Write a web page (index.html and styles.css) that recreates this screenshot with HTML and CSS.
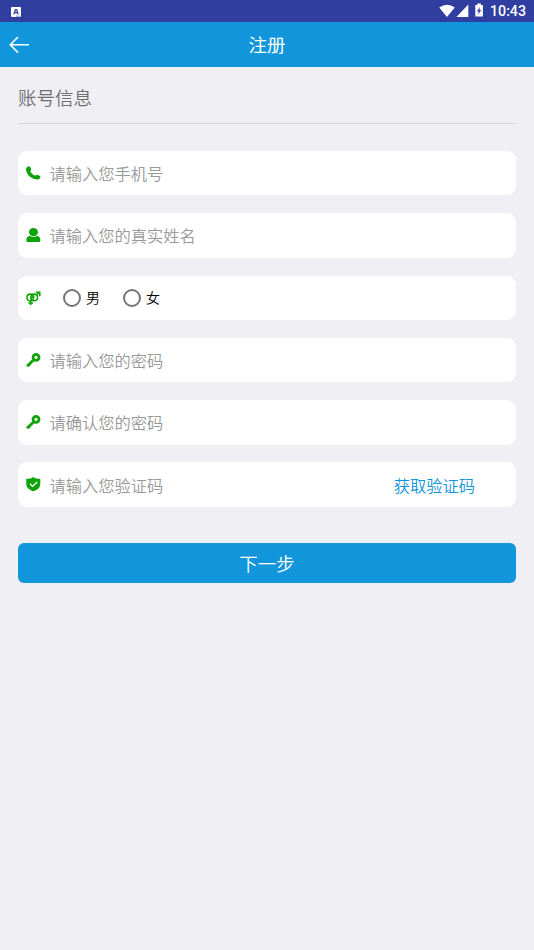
FILE: index.html
```html
<!DOCTYPE html>
<html lang="zh-CN">
<head>
<meta charset="utf-8">
<title>注册</title>
<link rel="stylesheet" href="styles.css">
</head>
<body>
<div class="status">
  <svg class="status-app" width="10" height="10" viewBox="0 0 10 10"><rect width="10" height="10" rx="1" fill="#fff"/><path d="M2.8 7.2 4.4 2.7h1.200l1.600 4.500M3.600 5.700h2.800" fill="none" stroke="#303f9f" stroke-width="1.200"/><path d="M5 9.200h3.800" stroke="#303f9f" stroke-width=".6"/></svg>
  <svg class="status-icons" width="46" height="16" viewBox="0 0 46 16" fill="#fff"><path d="M.2 4.400Q8-.8 15.800 4.400L8 14z"/><path d="M29.300 1.500V14H17.400z"/><path d="M36.300 2h2V.6h3.600V2h2v11.600h-7.600z"/><path d="M41 3.800 37.900 8.400h1.800l-.6 3.400 3.100-4.700h-1.800z" fill="#303f9f"/></svg>
  <span class="clock">10:43</span>
</div>
<header class="navbar">
  <svg class="back" width="20" height="18" viewBox="0 0 20 18" fill="none" stroke="#fff" stroke-width="1.6"><path d="M9 1 1.3 8.8 9 16.6M1.3 8.8H20"/></svg>
  <h1>注册</h1>
</header>
<main>
  <h2>账号信息</h2>
  <form class="fields">
    <div class="field">
      <svg class="icon" viewBox="0 0 14 14"><path d="M1 .9C2.300-.1 3.600.1 4.200 1.200l.8 1.600c.3.900-.1 1.400-.9 2 .6 1.900 2.600 3.900 4.900 4.700.7-.9 1.300-1.300 2.200-.9l2 .9c1 .6 1 1.500.1 2.500-1 1-2.900 1.200-4.800.5C4.700 11.900 1.400 8.500.3 5 -.2 3.300 0 1.800 1 .9z"/></svg>
      <span class="hint">请输入您手机号</span>
    </div>
    <div class="field">
      <svg class="icon" viewBox="0 0 14 14"><ellipse cx="7.200" cy="4" rx="4.300" ry="3.900"/><path d="M3.600 7.600Q7.200 10 10.700 7.600C13 8.300 13.900 9.600 13.900 11.800c0 1.300-.7 1.800-1.700 1.800H2c-1 0-1.700-.5-1.700-1.800 0-2.200 1-3.500 3.300-4.200z"/></svg>
      <span class="hint">请输入您的真实姓名</span>
    </div>
    <div class="field">
      <svg class="icon line" viewBox="0 0 14 14"><circle cx="4.100" cy="6.200" r="3.200"/><circle cx="7.900" cy="6.200" r="3.200"/><path d="M4.500 9.400v4.200M2.300 11.600h4.500M10.200 3.900 13 1.200M9.500 1.200h3.800V5M4.300 7.500 7.800 4.700"/></svg>
      <label class="option first"><i class="radio"></i><span>男</span></label>
      <label class="option"><i class="radio"></i><span>女</span></label>
    </div>
    <div class="field">
      <svg class="icon key" viewBox="0 0 14 14"><circle cx="9.700" cy="4.200" r="2.900"/><path d="M7.500 6.500 1 12.800M3 10.900l1.200 1.100"/></svg>
      <span class="hint">请输入您的密码</span>
    </div>
    <div class="field">
      <svg class="icon key" viewBox="0 0 14 14"><circle cx="9.700" cy="4.200" r="2.900"/><path d="M7.500 6.500 1 12.800M3 10.900l1.200 1.100"/></svg>
      <span class="hint">请确认您的密码</span>
    </div>
    <div class="field">
      <svg class="icon" viewBox="0 0 14 14"><path d="M7.100 0C9 1.400 11 1.800 13.800 1.800v5c0 3.300-2.500 5.700-6.700 7C3 12.500.3 10.100.3 6.800v-5C3 1.800 5.200 1.400 7.100 0z"/><path d="m3.800 6.600 2.500 2.500 4.500-4.200" fill="none" stroke="#fff" stroke-width="1.300"/></svg>
      <span class="hint">请输入您验证码</span>
      <span class="code">获取验证码</span>
    </div>
    <button type="button" class="next">下一步</button>
  </form>
</main>
</body>
</html>
```
FILE: styles.css
```css
* { box-sizing: border-box; }
body {
  margin: 0;
  min-height: 950px;
  background: #efeff4;
  font-family: "Noto Sans CJK SC", sans-serif;
}
.status {
  display: flex;
  align-items: center;
  height: 22px;
  padding: 0 8px 0 11px;
  background: #303f9f;
}
.status-app { margin-top: 1px; }
.status-icons { margin-left: auto; margin-right: 5px; margin-bottom: 1px; }
.clock {
  color: #fff;
  font: 500 14.2px/22px Roboto, sans-serif;
}
.navbar {
  display: grid;
  grid-template-columns: 40px 1fr 40px;
  align-items: center;
  height: 45px;
  background: #1296db;
  color: #fff;
}
.back { margin-left: 9px; }
h1 {
  margin: 0;
  height: 45px;
  font-size: 18.5px;
  font-weight: 400;
  line-height: 44px;
  text-align: center;
}
main { padding: 0 18px; }
h2 {
  height: 57px;
  margin: 0 0 27px;
  border-bottom: 1px solid #d5d5d9;
  color: #6d6d72;
  font-size: 18.5px;
  font-weight: 350;
  line-height: 60px;
}
.fields {
  display: flex;
  flex-direction: column;
  gap: 17.9px;
}
.field {
  display: flex;
  align-items: center;
  height: 44.4px;
  padding-left: 8px;
  border-radius: 9px;
  background: #fff;
}
.icon {
  width: 14.5px;
  height: 14.5px;
  margin-right: 9px;
  fill: #0fa30a;
  flex: none;
}
.icon.line { fill: none; stroke: #0fa30a; stroke-width: 1.5; }
.icon.key { fill: none; stroke: #0fa30a; stroke-width: 2.7; }
.hint { color: #999; font-size: 16.25px; font-weight: 350; }
.option {
  display: flex;
  align-items: center;
  gap: 5px;
  width: 60px;
  color: #000;
  font-size: 14px;
  font-weight: 350;
}
.option span { margin-bottom: 2px; }
.option.first { margin-left: 13.5px; }
.radio {
  width: 18px;
  height: 18px;
  border: 2px solid #757575;
  border-radius: 50%;
}
.code {
  margin-left: auto;
  margin-right: 41px;
  color: #1296db;
  font-size: 16.25px;
  font-weight: 350;
}
.next {
  height: 40px;
  margin-top: 17.9px;
  padding: 0;
  border: 0;
  border-radius: 6px;
  background: #1296db;
  color: #fff;
  font: 350 18.5px/40px "Noto Sans CJK SC", sans-serif;
}
```
